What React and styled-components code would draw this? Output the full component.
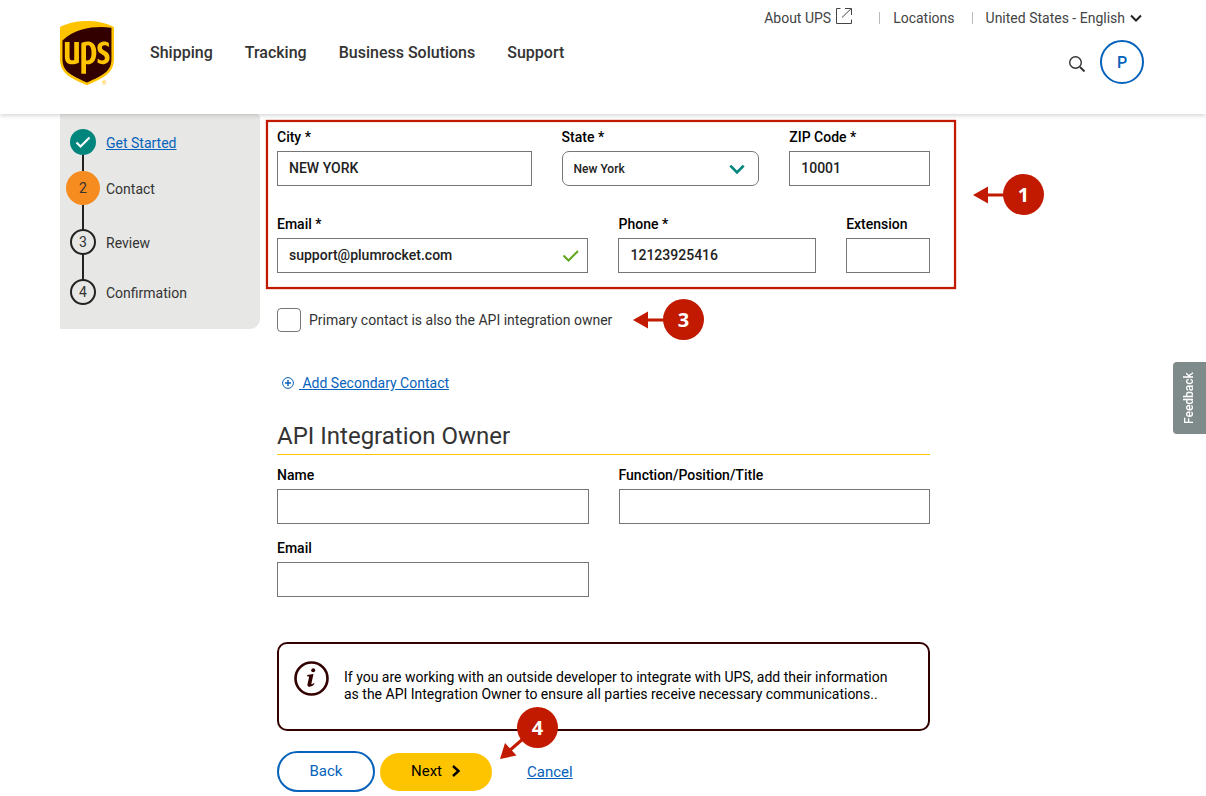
import styled, { createGlobalStyle } from "styled-components";
import { FaUps } from "react-icons/fa";

const GlobalStyle = createGlobalStyle`
  * {
    box-sizing: border-box;
  }
  body {
    margin: 0;
    background: white;
    color: #333;
    font-family: Roboto, "Liberation Sans", sans-serif;
    font-size: 14px;
    line-height: 20px;
  }
  button, input, select {
    font-family: inherit;
  }
`;

const Header = styled.header`
  position: relative;
  z-index: 2;
  display: flex;
  justify-content: space-between;
  height: 114px;
  padding: 8px 62px 16px 60px;
  background: white;
  box-shadow: 0 1px 5px rgba(0, 0, 0, 0.2);
`;

const HeaderLeft = styled.div`
  display: flex;
  align-items: center;
  gap: 36px;
`;

const LogoLink = styled.a`
  display: flex;
`;

const Nav = styled.nav`
  display: flex;
  gap: 32px;
`;

const NavLink = styled.a`
  color: #333;
  font-size: 16px;
  font-weight: 500;
  text-decoration: none;
`;

const HeaderRight = styled.div`
  display: flex;
  flex-direction: column;
  align-items: flex-end;
  gap: 12px;
`;

const Utility = styled.div`
  display: flex;
  align-items: center;
  padding-right: 2px;
`;

const UtilityLink = styled.a`
  display: flex;
  align-items: center;
  gap: 5px;
  color: #444;
  text-decoration: none;

  svg {
    margin-bottom: 4px;
  }
`;

const Divider = styled.span`
  width: 1px;
  height: 12px;
  margin: 0 13px 0 ${({ $wide }) => ($wide ? "27px" : "17px")};
  background: #bbb;
`;

const LanguageButton = styled.button`
  display: flex;
  align-items: center;
  gap: 5px;
  padding: 0;
  border: 0;
  background: none;
  color: #444;
  font-size: 14px;
  line-height: 20px;
`;

const UserTools = styled.div`
  display: flex;
  align-items: center;
  gap: 14px;
`;

const IconButton = styled.button`
  display: flex;
  padding: 3px 0 0;
  border: 0;
  background: none;
`;

const Avatar = styled.button`
  width: 44px;
  height: 44px;
  padding: 0;
  border: 2px solid #0662bb;
  border-radius: 50%;
  background: white;
  color: #0662bb;
  font-size: 16px;
  font-weight: 500;
`;

const Page = styled.div`
  display: flex;
  align-items: flex-start;
  gap: 17px;
  padding: 0 60px 4px;
`;

const Sidebar = styled.aside`
  flex: 0 0 200px;
  padding: 15px 6px 24px;
  border-radius: 0 4px 10px 0;
  background: #e7e7e5;
`;

const Steps = styled.ol`
  position: relative;
  display: flex;
  flex-direction: column;
  margin: 0;
  padding: 0;
  list-style: none;

  &::before {
    content: "";
    position: absolute;
    top: 13px;
    bottom: 13px;
    left: 16px;
    width: 2px;
    background: #222;
  }
`;

const Step = styled.li`
  position: relative;
  display: flex;
  align-items: center;
  gap: 6px;
  margin-top: ${({ $state }) => ({ done: "0", active: "16px", todo: "24px" })[$state]};
`;

const StepLabel = styled.span`
  padding-top: 2px;
`;

const MarkerCell = styled.span`
  display: flex;
  justify-content: center;
  width: 34px;
`;

const Marker = styled.span`
  display: flex;
  align-items: center;
  justify-content: center;
  width: ${({ $state }) => ($state === "active" ? "34px" : "26px")};
  height: ${({ $state }) => ($state === "active" ? "34px" : "26px")};
  border: ${({ $state }) => ($state === "todo" ? "2px solid #222" : "0")};
  border-radius: 50%;
  background: ${({ $state }) =>
    ({ done: "#00857d", active: "#f68b1f", todo: "#e7e7e5" })[$state]};
`;

const Link = styled.a`
  color: #0662bb;
  font-size: ${({ $large }) => ($large ? "15px" : "14px")};
  text-decoration: underline;
`;

const Form = styled.form`
  flex: 1;
  max-width: 653px;
  padding-top: 13px;
`;

const FieldGrid = styled.div`
  position: relative;
  display: grid;
  grid-template-columns: repeat(12, 1fr);
  column-gap: 30px;
  row-gap: ${({ $gap }) => $gap};
`;

const Field = styled.div`
  grid-column: span ${({ $span }) => $span};
  display: flex;
  flex-direction: column;
  gap: 4px;
`;

const Label = styled.label`
  color: #000;
  font-weight: 500;
`;

const Control = styled.div`
  display: grid;
  align-items: center;

  & > * {
    grid-area: 1 / 1;
  }
  & > svg {
    justify-self: end;
    margin-right: ${({ $inset }) => $inset || "8px"};
    pointer-events: none;
  }
`;

const Input = styled.input`
  width: 100%;
  height: 35px;
  padding: 0 11px 2px;
  border: 1px solid #767676;
  border-radius: 0;
  background: white;
  color: #222;
  font-size: 14px;
  font-weight: 500;
`;

const Select = styled.select`
  width: 100%;
  height: 35px;
  padding: 0 11px;
  border: 1px solid #767676;
  border-radius: 7px;
  appearance: none;
  background: white;
  color: #222;
  font-size: 12px;
  font-weight: 500;
`;

// Red frame drawn round the group of primary contact fields
const Highlight = styled.div`
  position: absolute;
  inset: -7px -26px -16px -11px;
  border: 2px solid #c11a00;
  box-shadow: 0 0 1px #c11a00, inset 0 0 1px #c11a00;
  pointer-events: none;
`;

const CalloutSvg = styled.svg`
  position: absolute;
  top: ${({ $top }) => $top};
  left: ${({ $left }) => $left};
  margin-left: ${({ $gap }) => $gap || 0};
  fill: #c11a00;
  stroke: #c11a00;
  pointer-events: none;

  text {
    fill: white;
    stroke: none;
    font-family: "Open Sans", sans-serif;
    font-size: 20px;
    font-weight: 700;
    text-anchor: middle;
  }
`;

const CheckRow = styled.div`
  display: flex;
  margin-top: 35px;
`;

const CheckLabel = styled.label`
  position: relative;
  display: flex;
  align-items: center;
  gap: 8px;
`;

const Checkbox = styled.input`
  width: 24px;
  height: 24px;
  margin: 0;
  border: 1px solid #767676;
  border-radius: 4px;
  appearance: none;
  background: white;
`;

const AddContact = styled.div`
  display: flex;
  align-items: center;
  gap: 5px;
  margin-top: 41px;
  padding-left: 5px;
`;

const SectionTitle = styled.h2`
  margin: 29px 0 10px;
  padding-bottom: 4px;
  border-bottom: 1px solid #ffc400;
  font-size: 24px;
  font-weight: 400;
  line-height: 28px;
`;

const Notice = styled.div`
  display: flex;
  align-items: flex-start;
  gap: 15px;
  margin-top: 45px;
  padding: 17px 30px 26px 15px;
  border: 2px solid #330000;
  border-radius: 10px;
  color: #000;

  svg {
    flex: none;
  }
`;

const NoticeText = styled.p`
  margin: 0;
  padding-top: 8px;
  line-height: 17px;
`;

const Actions = styled.div`
  position: relative;
  display: flex;
  align-items: center;
  gap: 5px;
  margin-top: 20px;
`;

const BackButton = styled.button`
  width: 98px;
  height: 41px;
  padding: 0 0 2px;
  border: 2px solid #0662bb;
  border-radius: 21px;
  background: white;
  color: #0662bb;
  font-size: 15px;
`;

const NextButton = styled.button`
  display: flex;
  align-items: center;
  justify-content: center;
  gap: 9px;
  width: 112px;
  height: 38px;
  margin-right: 30px;
  padding: 0 0 2px;
  border: 0;
  border-radius: 19px;
  background: #ffc400;
  color: #000;
  font-size: 15px;
`;

const FeedbackTab = styled.button`
  position: fixed;
  top: 50%;
  right: 0;
  width: 33px;
  height: 72px;
  padding: 0;
  border: 0;
  border-radius: 0 4px 4px 0;
  background: #7f8b8a;
  color: white;
  font-size: 12px;
  font-weight: 500;
  writing-mode: vertical-rl;
  transform: translateY(-50%) rotate(180deg);
`;

const Logo = () => (
  <svg width="54" height="64" viewBox="0 0 54 64" role="img" aria-label="UPS">
    <path
      d="M1 7Q27 -5 53 7V38C53 44 51 48 47 51C43 54 35 59 27 62.5C19 59 11 54 7 51C3 48 1 44 1 38Z"
      fill="#330000"
    />
    <FaUps x="-9.8" y="-4.8" size="73.6" color="#ffc400" />
    <text x="42" y="64" fontSize="6" fill="#ffc400">®</text>
  </svg>
);

const ExternalIcon = () => (
  <svg width="16" height="16" viewBox="0 0 16 16" fill="none" stroke="#444">
    <path d="M4.5 .5H.5V15.500H15.500V11.500" />
    <path d="M6 9.500L15 .8M9 .5H15.500V7" />
  </svg>
);

const Chevron = ({ size = 12, color = "#222" }) => (
  <svg width={size} height={size} viewBox="0 0 12 12" fill="none" stroke={color} strokeWidth="2">
    <path d="M1 3.5L6 8.5L11 3.5" />
  </svg>
);

const SearchIcon = () => (
  <svg width="18" height="18" viewBox="0 0 18 18" fill="none" stroke="#333">
    <circle cx="7.5" cy="7.5" r="5.8" strokeWidth="1.4" />
    <path d="M12 12L16.5 16.5" strokeWidth="2" />
  </svg>
);

const ArrowCallout = ({ number, ...props }) => (
  <CalloutSvg width="71" height="41" viewBox="0 0 71 41" {...props}>
    <circle cx="50.5" cy="20.5" r="20.5" stroke="none" />
    <path d="M0 21L15 12.5V29.5Z" stroke="none" />
    <path d="M14 21H34" strokeWidth="3" />
    <text x="50.5" y="27.5">{number}</text>
  </CalloutSvg>
);

const DiagonalCallout = ({ number, ...props }) => (
  <CalloutSvg width="58" height="53" viewBox="0 0 58 53" {...props}>
    <circle cx="37.5" cy="20.5" r="20.5" stroke="none" />
    <path d="M0 52L5 36L16.5 48.5Z" stroke="none" />
    <path d="M9 44L24 31" strokeWidth="3" />
    <text x="37.5" y="27.5">{number}</text>
  </CalloutSvg>
);

const steps = [
  { label: "Get Started", state: "done" },
  { label: "Contact", state: "active" },
  { label: "Review", state: "todo" },
  { label: "Confirmation", state: "todo" },
];

const TextField = ({ id, label, span, value = "", type = "text", children }) => (
  <Field $span={span}>
    <Label htmlFor={id}>{label}</Label>
    <Control>
      <Input id={id} type={type} defaultValue={value} />
      {children}
    </Control>
  </Field>
);

const App = () => {
  return (
    <>
      <GlobalStyle />
      <Header>
        <HeaderLeft>
          <LogoLink href="#">
            <Logo />
          </LogoLink>
          <Nav>
            <NavLink href="#">Shipping</NavLink>
            <NavLink href="#">Tracking</NavLink>
            <NavLink href="#">Business Solutions</NavLink>
            <NavLink href="#">Support</NavLink>
          </Nav>
        </HeaderLeft>
        <HeaderRight>
          <Utility>
            <UtilityLink href="#">
              About UPS
              <ExternalIcon />
            </UtilityLink>
            <Divider $wide />
            <UtilityLink href="#">Locations</UtilityLink>
            <Divider />
            <LanguageButton type="button" aria-haspopup="true">
              United States - English
              <Chevron />
            </LanguageButton>
          </Utility>
          <UserTools>
            <IconButton type="button" aria-label="Search">
              <SearchIcon />
            </IconButton>
            <Avatar type="button">P</Avatar>
          </UserTools>
        </HeaderRight>
      </Header>

      <Page>
        <Sidebar>
          <Steps>
            {steps.map(({ label, state }, i) => (
              <Step key={label} $state={state}>
                <MarkerCell>
                  <Marker $state={state}>
                    {state === "done" ? (
                      <svg width="16" height="14" viewBox="0 0 16 14" fill="none" stroke="white" strokeWidth="2.2">
                        <path d="M1.5 7.5L5.5 11.5L14.5 2.5" />
                      </svg>
                    ) : (
                      i + 1
                    )}
                  </Marker>
                </MarkerCell>
                <StepLabel>
                  {state === "done" ? <Link href="#">{label}</Link> : label}
                </StepLabel>
              </Step>
            ))}
          </Steps>
        </Sidebar>

        <Form>
          <FieldGrid $gap="28px">
            <TextField id="city" label="City *" span={5} value="NEW YORK" />
            <Field $span={4}>
              <Label htmlFor="state">State *</Label>
              <Control $inset="14px">
                <Select id="state" defaultValue="New York">
                  <option>New York</option>
                </Select>
                <Chevron size={16} color="#00857d" />
              </Control>
            </Field>
            <TextField id="zip" label="ZIP Code *" span={3} value="10001" />
            <TextField id="email" label="Email *" span={6} type="email" value="support@plumrocket.com">
              <svg width="18" height="14" viewBox="0 0 18 14" fill="none" stroke="#5fa71c" strokeWidth="2">
                <path d="M1.5 6.5L6.5 11.5L16 2" />
              </svg>
            </TextField>
            <TextField id="phone" label="Phone *" span={4} type="tel" value="12123925416" />
            <TextField id="extension" label="Extension" span={2} />
            <Highlight />
            <ArrowCallout number="1" $top="47px" $left="100%" $gap="43px" />
          </FieldGrid>

          <CheckRow>
            <CheckLabel>
              <Checkbox type="checkbox" />
              Primary contact is also the API integration owner
              <ArrowCallout number="3" $top="-9px" $left="100%" $gap="21px" />
            </CheckLabel>
          </CheckRow>

          <AddContact>
            <svg width="12" height="12" viewBox="0 0 12 12" fill="none" stroke="#0662bb">
              <circle cx="6" cy="6" r="5.4" />
              <path d="M6 3V9M3 6H9" strokeWidth="1.4" />
            </svg>
            <Link href="#">&nbsp;Add Secondary Contact</Link>
          </AddContact>

          <SectionTitle>API Integration Owner</SectionTitle>
          <FieldGrid $gap="14px">
            <TextField id="owner-name" label="Name" span={6} />
            <TextField id="owner-title" label="Function/Position/Title" span={6} />
            <TextField id="owner-email" label="Email" span={6} type="email" />
          </FieldGrid>

          <Notice>
            <svg width="35" height="35" viewBox="0 0 35 35" fill="#330000">
              <circle cx="17.5" cy="17.5" r="16" fill="none" stroke="#330000" strokeWidth="2.6" />
              <circle cx="19.2" cy="9.3" r="2" />
              <path d="M13.2 14L19.5 13L17.3 23Q18.5 23.5 20 22L20.5 23Q17.5 26.4 14.6 25.7Q13 25 13.5 23L15.2 15.8Q14.5 15 13.2 15.3Z" />
            </svg>
            <NoticeText>
              If you are working with an outside developer to integrate with UPS, add their
              information as the API Integration Owner to ensure all parties receive necessary
              communications..
            </NoticeText>
          </Notice>

          <Actions>
            <BackButton type="button">Back</BackButton>
            <NextButton type="submit">
              Next
              <svg width="10" height="12" viewBox="0 0 10 12" fill="none" stroke="#000" strokeWidth="2.4">
                <path d="M2 1L7.5 6L2 11" />
              </svg>
            </NextButton>
            <Link href="#" $large>Cancel</Link>
            <DiagonalCallout number="4" $top="-44px" $left="223px" />
          </Actions>
        </Form>
      </Page>

      <FeedbackTab type="button">Feedback</FeedbackTab>
    </>
  );
};

export default App;
